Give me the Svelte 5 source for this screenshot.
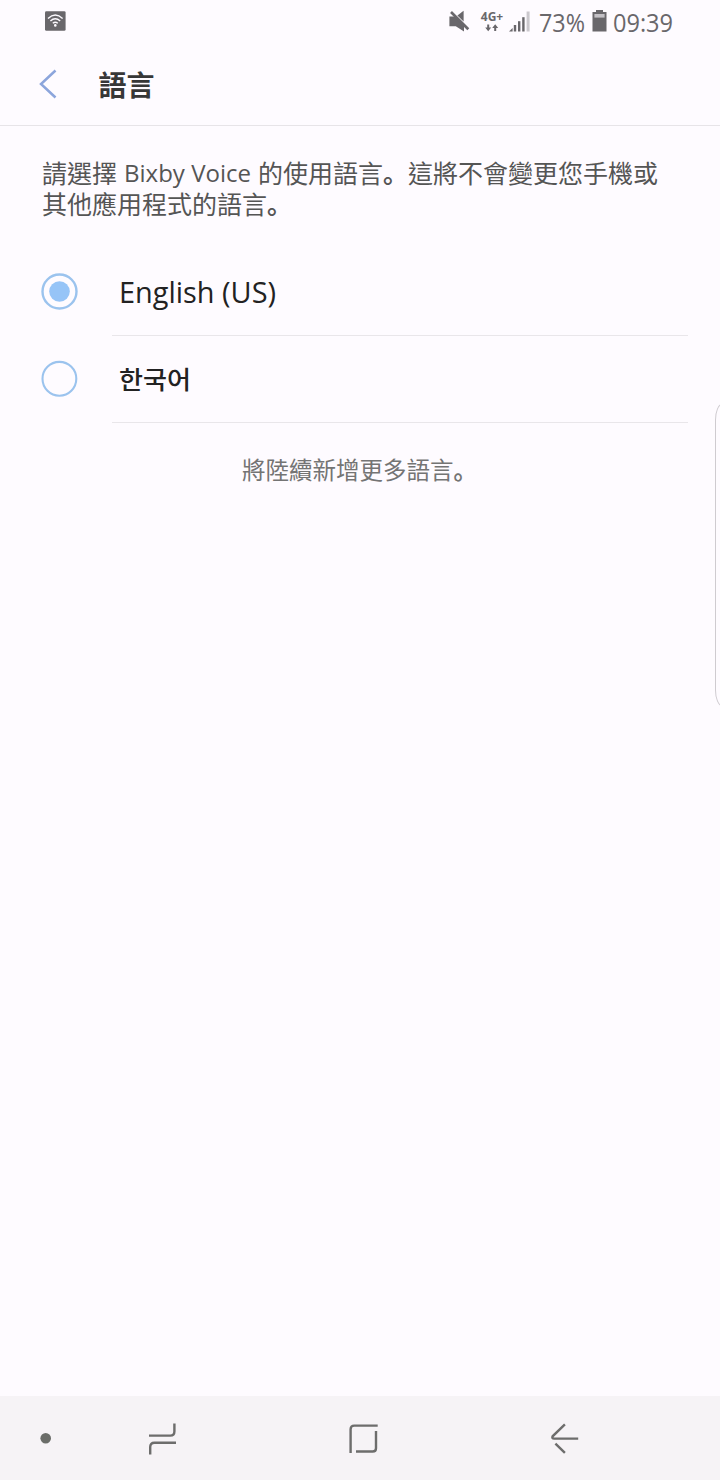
<script>
  const languages = [
    { label: 'English (US)', lang: 'en', width: 157 },
    { label: '한국어', lang: 'ko', width: 72 }
  ];
  let selected = $state('en');
</script>

<div class="screen">
  <div class="status">
    <svg class="wifi" width="22" height="20" viewBox="0 0 22 20">
      <rect x="0" y="0.2" width="20.6" height="19.6" rx="1.4" fill="#69676b" />
      <g fill="none" stroke="#fdfaff" stroke-width="1.4">
        <path d="M3 7.4Q10.3 0.8 17.6 7.4" />
        <path d="M5.4 10Q10.3 5.6 15.2 10" />
        <path d="M7.8 12.3Q10.3 10.2 12.8 12.3" />
      </g>
      <circle cx="10.3" cy="14.4" r="1.3" fill="#fdfaff" />
    </svg>
    <svg class="mute" width="22" height="22" viewBox="0 0 22 22" fill="#69676b">
      <path d="M0.4 5.5H6L15 14.5V20.5L6.8 15.2H0.4Z" />
      <path d="M8.4 4.6L14.6 -0.2V10.6Z" />
      <path d="M2 1L19.3 18.3" stroke="#69676b" stroke-width="2.7" />
    </svg>
    <div class="net">
      <span class="gen">4G+</span>
      <svg width="14" height="8" viewBox="0 0 14 8" fill="#69676b">
        <path d="M2.2 0.5H4.2V3.6H6.2L3.2 7.3L0.2 3.6H2.2Z" />
        <path d="M9.2 7H11.2V3.9H13.2L10.2 0.2L7.2 3.9H9.2Z" />
      </svg>
    </div>
    <svg class="signal" width="22" height="21" viewBox="0 0 22 21" fill="#69676b">
      <path d="M0 20.5L3.6 17V20.5Z" />
      <rect x="4.8" y="14" width="2.4" height="6.5" />
      <rect x="9" y="10.2" width="2.4" height="10.3" />
      <rect x="13.2" y="6.2" width="2.4" height="14.3" />
      <rect x="17.6" y="0.5" width="3" height="20" fill="#cbc8cd" />
    </svg>
    <svg class="pct" width="48" height="40"><text x="1" y="31.5" textLength="46" lengthAdjust="spacingAndGlyphs">73%</text></svg>
    <svg class="battery" width="15" height="22" viewBox="0 0 15 22">
      <path d="M4 0H11V2H14.5V21.5H0.5V2H4Z" fill="#69676b" />
      <rect x="2.4" y="4" width="10.2" height="3.6" fill="#c4c1c6" />
    </svg>
    <svg class="clock" width="62" height="40"><text x="1" y="31.5" textLength="60" lengthAdjust="spacingAndGlyphs">09:39</text></svg>
  </div>

  <header>
    <svg width="18" height="30" viewBox="0 0 18 30">
      <path d="M16.5 1.5L2 15L16.5 28.5" fill="none" stroke="#8ca5dc" stroke-width="2.5" />
    </svg>
    <h1>語言</h1>
  </header>

  <main>
    <p class="intro">請選擇<svg class="brand" width="141" height="40"><text x="7" y="28" textLength="127" lengthAdjust="spacingAndGlyphs">Bixby Voice</text></svg>的使用語言<span class="stop">。</span>這將不會變更您手機或<br />其他應用程式的語言<span class="stop">。</span></p>

    <div class="list">
      {#each languages as item}
        <label class="row">
          <input type="radio" name="language" value={item.lang} bind:group={selected} />
          <svg class="radio" width="38" height="38" viewBox="0 0 38 38">
            {#if selected === item.lang}
              <circle cx="19.5" cy="18.5" r="17" fill="none" stroke="#9bc3ee" stroke-width="2.4" />
              <circle cx="19.5" cy="18.5" r="10.3" fill="#96c4f7" />
            {:else}
              <circle cx="19.4" cy="18.8" r="16.9" fill="none" stroke="#9bc3ee" stroke-width="2.1" />
            {/if}
          </svg>
          <span class="name">
            <svg width="200" height="50" class={item.lang}><text x="7" y="39" textLength={item.width} lengthAdjust="spacingAndGlyphs">{item.label}</text></svg>
          </span>
        </label>
      {/each}
    </div>
    <p class="more">將陸續新增更多語言<span class="stop">。</span></p>
  </main>

  <div class="edge"></div>

  <nav>
    <svg class="dot" width="12" height="12"><circle cx="5.7" cy="6.2" r="5.3" fill="#6b6d69" /></svg>
    <svg class="recents" width="30" height="32" viewBox="0 0 30 32">
      <path d="M1 11.8H22.3Q26.4 11.8 26.4 7.6V-0.2M28 18.9H6.4Q2.2 18.9 2.2 23.1V30.7" transform="translate(0 -0.2)" />
    </svg>
    <svg class="home" width="32" height="32" viewBox="0 0 32 32">
      <path d="M2.6 30V6.2Q2.6 2.6 6.2 2.6H29.7M28 8.1V25.2Q28 28.5 24.7 28.5H8" />
    </svg>
    <svg class="back" width="30" height="32" viewBox="0 0 30 32">
      <path d="M14.9 1.4L2.6 13.3Q1.6 15.6 4.2 15.6H28.2M5.4 20.6L14.9 29.9" />
    </svg>
  </nav>
</div>

<style>
  :global(body) {
    background: #fefbff;
  }
  .screen {
    position: relative;
    width: 720px;
    height: 1480px;
    display: flex;
    flex-direction: column;
    overflow: hidden;
    background: #fefbff;
    font-family: 'Noto Sans CJK TC', sans-serif;
  }
  svg {
    display: block;
    flex: none;
    overflow: visible;
  }
  .status {
    display: flex;
    height: 44px;
    box-sizing: border-box;
    padding: 0 44px 0 45px;
    align-items: flex-start;
    flex: none;
  }
  .status text {
    font: 26px 'Open Sans', sans-serif;
    fill: #69676b;
  }
  .wifi {
    margin: 11px 382px 0 0;
  }
  .mute {
    margin-top: 11px;
  }
  .net {
    width: 26px;
    margin: 9px 0 0 8px;
    display: flex;
    flex-direction: column;
    align-items: center;
  }
  .gen {
    font: bold 12px/15px 'Open Sans', sans-serif;
    color: #69676b;
  }
  .signal {
    margin: 11px 0 0 4px;
  }
  .pct {
    margin-left: 7px;
  }
  .battery {
    margin: 10px 0 0 6px;
  }
  .clock {
    margin-left: 5px;
  }
  header {
    height: 82px;
    box-sizing: border-box;
    border-bottom: 1px solid #e7e4e8;
    display: flex;
    align-items: flex-start;
    padding: 25px 0 0 39px;
    flex: none;
  }
  h1 {
    margin: -5px 0 0 41.5px;
    font-size: 28px;
    line-height: 40px;
    font-weight: 700;
    color: #373737;
  }
  main {
    flex: 1;
  }
  .intro {
    margin: 31px 0 0 42px;
    font-size: 25px;
    line-height: 31px;
    height: 62px;
    color: #555;
    white-space: nowrap;
  }
  .brand {
    display: inline-block;
    vertical-align: 4px;
    margin: -15px 0;
  }
  .brand text {
    font: 24.5px 'Open Sans', sans-serif;
    fill: #555;
  }
  .stop {
    font-weight: 700;
    font-family: 'Noto Sans CJK SC', sans-serif;
    line-height: 1;
  }
  .list {
    margin-top: 29px;
  }
  .row {
    display: flex;
    height: 87.5px;
    padding: 0 32px 0 40px;
    align-items: center;
  }
  input {
    appearance: none;
    width: 0;
    height: 0;
    margin: 0;
  }
  .name {
    flex: 1;
    height: 100%;
    box-sizing: border-box;
    margin-left: 34px;
    padding-top: 16px;
    border-bottom: 1px solid #e9e6ea;
  }
  .name text {
    font: 28.5px 'Open Sans', 'Noto Sans CJK KR', sans-serif;
    fill: #222;
  }
  .name .ko text {
    font-size: 25px;
    font-weight: 500;
  }
  .name .ko {
    margin-top: -2px;
  }
  .more {
    margin: 30px 0 0 242px;
    font-size: 23.5px;
    line-height: 32px;
    color: #747474;
  }
  .edge {
    position: absolute;
    left: 715px;
    top: 404px;
    width: 20px;
    height: 302px;
    border: 1px solid #cfcbd0;
    border-left-width: 1.5px;
    border-radius: 7px / 16px;
    box-sizing: border-box;
  }
  nav {
    height: 84px;
    background: #f6f3f6;
    display: flex;
    flex: none;
  }
  nav path {
    fill: none;
    stroke: #6d6d6c;
    stroke-width: 2.4;
  }
  .dot {
    margin: 36px 0 0 40px;
  }
  .recents {
    margin: 28px 0 0 96px;
  }
  .home {
    margin: 27px 0 0 170px;
  }
  .back {
    margin: 27px 0 0 170px;
  }
</style>
